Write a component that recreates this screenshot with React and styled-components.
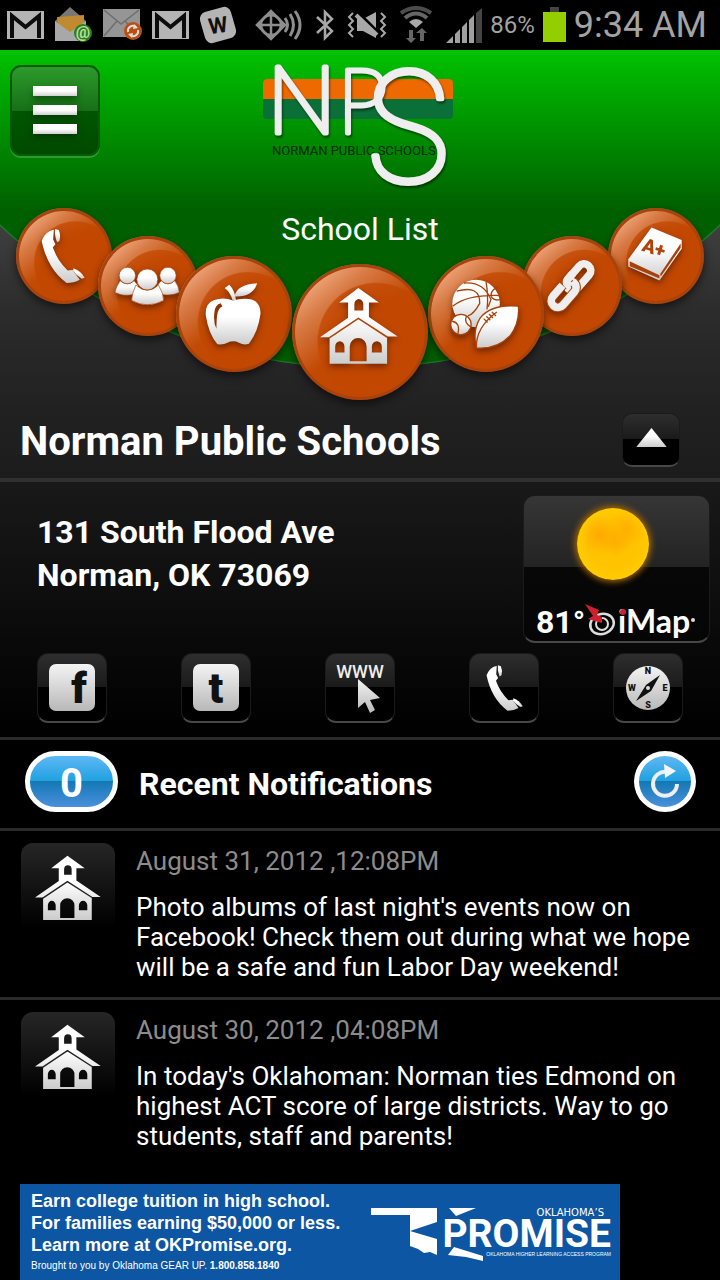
/**
 *
 * District home screen
 *
 */

import React from 'react';
import styled, { createGlobalStyle, css } from 'styled-components';

const GlobalStyle = createGlobalStyle`
  * {
    box-sizing: border-box;
  }

  body {
    margin: 0;
    background: #000;
    color: #fff;
    font-family: Roboto, 'Liberation Sans', sans-serif;
  }

  h1, h2, p {
    margin: 0;
  }

  button {
    padding: 0;
    border: 0;
    font-family: inherit;
    color: inherit;
    cursor: pointer;
  }

  a {
    color: inherit;
    text-decoration: none;
  }

  svg {
    display: block;
    flex: none;
    overflow: visible;
  }
`;

const Page = styled.div`
  display: flex;
  flex-direction: column;
  min-height: 100vh;
`;

/* status bar */

const StatusBar = styled.header`
  display: flex;
  align-items: center;
  justify-content: space-between;
  height: 50px;
  padding: 0 13px 0 7px;
  background: #000;
  color: #a3a3a3;
`;

const StatusGroup = styled.div`
  display: flex;
  align-items: center;
  gap: ${({ gap }) => gap}px;
`;

const BatteryText = styled.span`
  font-size: 24px;
`;

const Clock = styled.span`
  font-size: 36px;
  line-height: 48px;
`;

/* hero */

const Hero = styled.section`
  position: relative;
  isolation: isolate;
  padding: 15px 10px 0;
  background: linear-gradient(#444 150px, #2c2c2c 260px, #222 350px, #1c1c1c);

  &::before {
    content: '';
    position: absolute;
    z-index: -1;
    inset: 0;
    clip-path: circle(527px at 50% -209px);
    background:
      radial-gradient(circle at 50% -209px, transparent 525px, #2c8240 527px),
      linear-gradient(#00c200, #006000 160px, #005c00 100%);
  }
`;

const HeroTop = styled.div`
  display: grid;
  grid-template-columns: 90px 1fr 90px;
  justify-items: center;
  height: 122px;
  margin-bottom: 21px;
`;

const MenuButton = styled.button`
  display: flex;
  flex-direction: column;
  align-items: center;
  justify-content: center;
  gap: 9px;
  width: 90px;
  height: 91px;
  padding-bottom: 2px;
  border: 2px solid #0a5a0a;
  border-radius: 11px;
  background: linear-gradient(#2c9a2c, #177017 50%, #005600 50%, #004a00);
  box-shadow: 0 2px 0 #2f9a2f;
`;

const MenuLine = styled.span`
  width: 44px;
  height: 10px;
  background: linear-gradient(#fff 50%, #d0d0d0);
  box-shadow: 0 4px 6px rgba(0, 40, 0, 0.5);
`;

const Stage = styled.div`
  display: grid;
  justify-items: center;

  & > * {
    grid-area: 1 / 1;
  }
`;

const StageTitle = styled.h2`
  font-size: 32px;
  line-height: 42px;
  font-weight: 400;
`;

const Carousel = styled.nav`
  display: flex;
  align-items: flex-start;
  justify-content: center;
`;

const Orb = styled.button`
  display: grid;
  place-items: center;
  flex: none;
  position: relative;
  z-index: ${({ level }) => level};
  width: ${({ size }) => size}px;
  height: ${({ size }) => size}px;
  margin: ${({ drop }) => drop}px ${({ right }) => right || 0}px 0 ${({ left }) => left || 0}px;
  padding-right: 3px;
  padding-bottom: ${({ lift }) => lift || 0}px;
  border-radius: 50%;
  background:
    radial-gradient(circle closest-side at 62% 57%, #c24700 60%, rgba(194, 71, 0, 0.75) 112%, transparent 115%),
    linear-gradient(140deg, #f5b08a 10%, #d77a44 28%, #c24a04 50%, #c24700 78%, #cc6a20);
  box-shadow: inset 0 0 0 3px #a9430b, 0 4px 8px rgba(0, 0, 0, 0.55);

  svg {
    filter: drop-shadow(0 3px 3px rgba(60, 20, 0, 0.6));
  }
`;

const TitleRow = styled.div`
  display: flex;
  align-items: center;
  justify-content: space-between;
  height: 78px;
  padding: 2px 30px 0 10px;
`;

const Title = styled.h1`
  padding-top: 4px;
  font-size: 40px;
  line-height: 48px;
  font-weight: 700;
`;

const glossy = css`
  background: linear-gradient(#2e2e2e, #1a1a1a 50%, #000 50%);
  border: 1px solid #1b1b1b;
  border-bottom: 2px solid #484848;
`;

const CollapseButton = styled.button`
  ${glossy}
  display: grid;
  place-items: center;
  width: 58px;
  height: 54px;
  padding-bottom: 4px;
  border-radius: 10px;
`;

/* contact panel */

const Contact = styled.section`
  border-top: 4px solid #303030;
  border-bottom: 3px solid #2a2a2a;
  padding-bottom: 14px;
  background: linear-gradient(#191919, #000);
`;

const ContactTop = styled.div`
  display: flex;
  justify-content: space-between;
  padding: 13px 10px 10px 37px;
`;

const Address = styled.address`
  padding-top: 16px;
  font-size: 32px;
  line-height: 43px;
  font-weight: 700;
  font-style: normal;
`;

const WeatherCard = styled.a`
  ${glossy}
  display: flex;
  flex-direction: column;
  align-items: center;
  justify-content: space-between;
  width: 187px;
  height: 148px;
  padding-top: 12px;
  border-radius: 12px;
  background: linear-gradient(#363636, #232323 49%, #070707 49%, #050505);
`;

const Sun = styled.span`
  width: 72px;
  height: 72px;
  margin-right: 8px;
  border-radius: 50%;
  background:
    radial-gradient(circle at 32% 38%, rgba(255, 140, 0, 0.5), transparent 30%),
    radial-gradient(circle at 68% 30%, rgba(255, 150, 0, 0.45), transparent 28%),
    radial-gradient(circle at 55% 50%, rgba(255, 150, 0, 0.4), transparent 26%),
    radial-gradient(#ffc400 50%, #ffd000 85%, #f5b000);
  box-shadow: 0 0 6px 2px #a86800;
`;

const WeatherFoot = styled.span`
  display: flex;
  align-items: center;
`;

const Degrees = styled.span`
  font-size: 32px;
  line-height: 38px;
  font-weight: 700;
`;

const SocialRow = styled.nav`
  display: grid;
  grid-template-columns: repeat(5, 1fr);
  justify-items: center;
`;

const Tile = styled.a`
  ${glossy}
  display: grid;
  place-items: center;
  width: 70px;
  height: 70px;
  border-radius: 11px;
`;

/* notifications */

const NotesHead = styled.div`
  display: flex;
  align-items: center;
  gap: 21px;
  height: 91px;
  padding: 0 24px 5px 25px;
  border-bottom: 3px solid #2a2a2a;
`;

const blueGloss = css`
  border: 5px solid #fff;
  background: linear-gradient(#5fb8f5, #1fa0e0 50%, #1478b4 50%, #4a90dc);
`;

const Count = styled.span`
  ${blueGloss}
  display: grid;
  place-items: center;
  width: 93px;
  height: 61px;
  padding-top: 4px;
  border-radius: 31px;
  font-size: 40px;
  font-weight: 700;
`;

const NotesTitle = styled.h2`
  flex: 1;
  padding-top: 4px;
  font-size: 32px;
  line-height: 40px;
  font-weight: 700;
`;

const RefreshButton = styled.button`
  ${blueGloss}
  display: grid;
  place-items: center;
  width: 62px;
  height: 61px;
  border-radius: 50%;
`;

const Note = styled.article`
  display: flex;
  gap: 21px;
  padding: 12px 20px 15px 21px;

  & + & {
    border-top: 3px solid #2a2a2a;
  }
`;

const NoteIcon = styled.div`
  display: grid;
  justify-items: center;
  flex: none;
  width: 94px;
  height: 94px;
  padding-top: 12px;
  border-radius: 12px;
  background: linear-gradient(#262626, #000 90%);
`;

const NoteBody = styled.div`
  padding-top: 3px;
`;

const NoteDate = styled.time`
  display: block;
  margin-bottom: 16px;
  font-size: 26px;
  line-height: 30px;
  color: #8c8c8c;
`;

const NoteText = styled.p`
  font-size: 26px;
  line-height: 30px;
`;

/* sponsor banner */

const Banner = styled.a`
  display: flex;
  justify-content: space-between;
  width: calc(100% - 120px);
  height: 96px;
  margin: 18px 0 0 20px;
  padding: 6px 9px 0 11px;
  background: #0d56a4;
  font-family: 'Liberation Sans', Arial, sans-serif;
`;

const BannerLead = styled.p`
  font-size: 18px;
  line-height: 22px;
  font-weight: 700;
  white-space: nowrap;
`;

const BannerSmall = styled.p`
  font-size: 10px;
  line-height: 20px;
`;

/* drawings */

const Gradients = () => (
  <svg width="0" height="0" style={{ position: 'absolute' }} aria-hidden="true">
    <defs>
      <linearGradient id="metal" x1="0" y1="0" x2="0" y2="1">
        <stop offset="0.4" stopColor="#fff" />
        <stop offset="1" stopColor="#ccc" />
      </linearGradient>
      <linearGradient id="silver" x1="0" y1="0" x2="0" y2="1">
        <stop offset="0" stopColor="#f4f4f4" />
        <stop offset="1" stopColor="#b8b8b8" />
      </linearGradient>
    </defs>
  </svg>
);

const GmailIcon = () => (
  <svg width="37" height="28" viewBox="0 0 37 28">
    <rect width="37" height="28" fill="#b4b4b4" />
    <path d="M5 27V5L18.500 16L32 5V27" fill="none" stroke="#0c0c0c" strokeWidth="4" />
  </svg>
);

const OpenMailIcon = () => (
  <svg width="39" height="36" viewBox="0 0 39 36">
    <path d="M1 14L16 0L32 14V34H1Z" fill="#777" />
    <path d="M3 10L30 8V26H5Z" fill="#c08a30" />
    <path d="M1 14L16 25L32 14V34H1Z" fill="#a8a8a8" />
    <circle cx="29" cy="26" r="9" fill="#2c7d1c" />
    <text x="29" y="31" textAnchor="middle" fontSize="16" fontWeight="700" fill="#b8e0a0">@</text>
  </svg>
);

const SyncMailIcon = () => (
  <svg width="39" height="32" viewBox="0 0 39 32">
    <rect width="37" height="28" fill="#959595" />
    <path d="M1 1L18 15L36 1M1 27L14 12M36 27L22 12" fill="none" stroke="#6e6e6e" strokeWidth="1.500" />
    <circle cx="30" cy="22" r="9" fill="#bb4f10" />
    <path d="M25 23A5 5 0 0 1 33 18M35 21A5 5 0 0 1 27 26" fill="none" stroke="#ddd" strokeWidth="2" />
    <path d="M31 15L35 19L30 20ZM29 29L25 25L30 24Z" fill="#ddd" />
  </svg>
);

const WordsIcon = () => (
  <svg width="38" height="38" viewBox="0 0 38 38">
    <rect x="3" y="3" width="32" height="32" rx="7" fill="#b4b4b4" transform="rotate(-16 19 19)" />
    <text x="19" y="27" textAnchor="middle" fontSize="22" fontWeight="700" fill="#111" transform="rotate(-8 19 19)">W</text>
  </svg>
);

const BeaconIcon = () => (
  <svg width="46" height="32" viewBox="0 0 46 32" fill="none" stroke="#8e8e8e" strokeWidth="2.500">
    <circle cx="15" cy="16" r="10" />
    <path d="M1 16L15 2L29 16L15 30ZM1 16H29M15 2V30" />
    <path d="M29 9Q34 16 29 23M34 5Q41 16 34 27M39 2Q49 16 39 30" strokeWidth="3" />
  </svg>
);

const BluetoothIcon = () => (
  <svg width="18" height="32" viewBox="0 0 18 32" fill="none" stroke="#a8a8a8" strokeWidth="2.500">
    <path d="M1 8L16 22L9 29V3L16 10L1 24" />
  </svg>
);

const MuteIcon = () => (
  <svg width="38" height="28" viewBox="0 0 38 28">
    <path d="M9 8H15L28 1V27L15 20H9Z" fill="#a8a8a8" />
    <path d="M9 1L31 23" stroke="#000" strokeWidth="4" />
    <path d="M8 4L29 24" stroke="#a8a8a8" strokeWidth="4" />
    <path d="M5 2L1 6L5 10L1 14L5 18L1 22L5 26M33 2L37 6L33 10L37 14L33 18L37 22L33 26" fill="none" stroke="#a8a8a8" strokeWidth="2" />
  </svg>
);

const WifiIcon = () => (
  <svg width="32" height="36" viewBox="0 0 32 36" fill="none">
    <path d="M1 6Q16 -4 31 6" stroke="#4c4c4c" strokeWidth="4" />
    <path d="M5 11Q16 2 27 11" stroke="#666" strokeWidth="4" />
    <path d="M9 15Q16 9 23 15L16 21Z" fill="#a8a8a8" />
    <path d="M9 23H13V31H16L11 36L6 31H9ZM20 34H24V26H27L22 21L16 26H20Z" fill="#666" />
  </svg>
);

const SignalIcon = () => (
  <svg width="36" height="36" viewBox="0 0 36 36">
    <path d="M0 36L7 29V36ZM9 27L14 22V36H9ZM16 20L21 15V36H16ZM23 13L28 8V36H23Z" fill="#a0a0a0" />
    <path d="M30 6L36 1V36H30Z" fill="#444" />
  </svg>
);

const BatteryIcon = () => (
  <svg width="23" height="36" viewBox="0 0 23 36">
    <rect x="7" width="9" height="5" fill="#444" />
    <rect y="5" width="23" height="30" fill="#93cf00" />
  </svg>
);

const DistrictLogo = () => (
  <svg width="200" height="124" viewBox="0 0 200 124" role="img" aria-label="Norman Public Schools logo">
    <rect x="3" y="14" width="190" height="40" rx="4" fill="#0b7038" />
    <path d="M3 34V18Q3 14 7 14H189Q193 14 193 18V34Z" fill="#ee6a00" />
    <text x="12" y="90" fontSize="13" fill="#052b05">NORMAN PUBLIC SCHOOLS</text>
    <text
      fontFamily="Inter, sans-serif"
      fontWeight="100"
      fill="#eee"
      stroke="#eee"
      strokeWidth="5"
      strokeLinejoin="round"
      style={{ filter: 'drop-shadow(1px 2px 1px rgba(0,0,0,.5))' }}
    >
      <tspan x="7" y="68" fontSize="90">N</tspan>
      <tspan x="77" y="68" fontSize="90" fontFamily="Lato, sans-serif">P</tspan>
      <tspan x="102" y="117" fontSize="152">S</tspan>
    </text>
  </svg>
);

const SchoolIcon = ({ size, ink }) => (
  <svg width={size} height={size} viewBox="120 113 236 230">
    <path
      fill="url(#metal)"
      fillRule="evenodd"
      d="M236 113L298 157H268V201L355 260H323V342H149V262H120L205 203V157H178ZM224 181V162a13 15 0 0 1 27 0V181ZM166 308V290a14 16 0 0 1 28 0V308ZM277 308V290a15 16 0 0 1 30 0V308ZM210 335V290a25 25 0 0 1 51 0V335Z"
    />
    <path d="M148 264L236 205L324 262" fill="none" stroke={ink} strokeWidth="5" />
  </svg>
);

const PhoneIcon = ({ width, height }) => (
  <svg width={width} height={height} viewBox="122 84 134 168" fill="url(#metal)">
    <path d="M150 91L161 88L159 118L166 132L158 142Q172 182 203 212L218 211L240 240Q222 250 200 250Q142 208 124 122Q132 100 150 91Z" />
    <path d="M165 86L176 89Q183 106 178 122L171 126Q163 108 165 86Z" />
    <path d="M221 205Q242 212 255 234L246 237Q230 228 220 213Z" />
  </svg>
);

const PeopleIcon = () => (
  <svg width="66" height="38" viewBox="340 205 198 116" fill="url(#metal)" stroke="#b04408" strokeWidth="2">
    <path d="M357 247Q343 268 341 283Q368 296 397 289L412 262L400 247Q379 266 357 247Z" />
    <path d="M482 247Q503 266 524 247Q537 266 538 283Q515 294 485 289L470 262Z" />
    <circle cx="379" cy="231" r="25" />
    <circle cx="503" cy="231" r="25" />
    <path d="M405 260Q393 285 392 307Q440 334 490 307Q489 285 474 260Q440 292 405 260Z" />
    <circle cx="440" cy="243" r="32" />
  </svg>
);

const AppleIcon = () => (
  <svg width="56" height="63" viewBox="608 247 168 190" fill="url(#metal)">
    <path d="M697 288Q702 252 765 248Q752 290 697 288Z" />
    <path d="M691 300Q685 276 667 262L681 252Q697 268 701 298Z" />
    <path fillRule="evenodd" d="M692 300Q665 288 635 298Q607 308 610 345Q618 400 645 432Q665 434 675 427Q693 418 710 427Q725 436 740 430Q768 395 775 340Q775 300 740 295Q715 292 692 300ZM655 308Q638 312 636 335Q632 365 642 385Q642 350 646 335Q650 322 660 318Z" />
  </svg>
);

const BallsIcon = () => (
  <svg width="68" height="70" viewBox="101 239 206 210" fill="url(#metal)" stroke="#a8420a" strokeWidth="4">
    <circle cx="177" cy="312" r="72" stroke="none" />
    <path fill="none" d="M107 320Q150 285 248 288M118 275Q190 255 188 312Q170 345 152 350M140 250Q200 245 222 300L214 322M207 245Q215 290 210 330M244 262Q215 275 225 295Q235 305 249 300" />
    <circle cx="131" cy="376" r="31" />
    <path fill="none" d="M104 366Q130 370 122 403M148 350Q138 370 162 384" />
    <path d="M178 447Q165 395 190 355Q225 313 305 320Q310 370 280 410Q240 452 178 447Z" />
    <path fill="none" d="M178 447Q175 385 240 338M200 358L212 370M208 351L220 363M216 344L228 356M225 338L237 350" />
  </svg>
);

const ChainIcon = () => (
  <svg width="54" height="54" viewBox="378 183 154 154" fill="none">
    <g transform="rotate(-49 455 259)">
      <rect x="443" y="240" width="88" height="38" rx="19" stroke="#eee" strokeWidth="22" />
      <rect x="379" y="240" width="88" height="38" rx="19" stroke="#b04408" strokeWidth="28" />
      <rect x="379" y="240" width="88" height="38" rx="19" stroke="#eee" strokeWidth="22" />
      <path d="M440 240H470" stroke="#b04408" strokeWidth="28" />
      <path d="M454 259Q446 240 464 240H484" stroke="#eee" strokeWidth="22" />
    </g>
  </svg>
);

const GradeBookIcon = () => (
  <svg width="54" height="54" viewBox="617 85 163 162">
    <path d="M688 86L779 124V150L712 246L618 204V182Z" fill="url(#metal)" />
    <path d="M622 188L712 230V240L622 203ZM716 234L776 148V134L714 226Z" fill="#a8420a" />
    <text x="695" y="168" textAnchor="middle" fontSize="58" fontWeight="900" fill="#b04408" transform="rotate(18 697 150)">A+</text>
  </svg>
);

const ImapLogo = () => (
  <svg width="112" height="38" viewBox="0 0 112 38">
    <ellipse cx="17" cy="21" rx="12" ry="10" fill="none" stroke="#ddd" strokeWidth="2.500" transform="rotate(-20 17 21)" />
    <ellipse cx="17" cy="21" rx="6" ry="6" fill="none" stroke="#ddd" strokeWidth="2" />
    <path d="M0 1L14 7L12 12L17 14L17 20L3 16L8 13Z" fill="#d02030" />
    <text x="33" y="30" fontSize="32" fontWeight="700" fontFamily="Lato, sans-serif" fill="#fff">iMap</text>
    <circle cx="38" cy="9" r="3" fill="#d02030" />
    <circle cx="108" cy="17" r="2" fill="#ddd" />
  </svg>
);

const LetterBadge = ({ letter, x }) => (
  <svg width="46" height="47" viewBox="0 0 46 47">
    <rect width="46" height="47" rx="7" fill="url(#silver)" />
    <text x={x} y="39" textAnchor="middle" fontSize="43" fontWeight="900" fill="#111">{letter}</text>
  </svg>
);

const WebIcon = () => (
  <svg width="56" height="56" viewBox="0 0 56 56">
    <text x="28" y="18" textAnchor="middle" fontSize="18" fontWeight="500" fill="#eee">WWW</text>
    <path d="M26 19V48L33 42L38 53L43 50L38 40L48 38Z" fill="url(#silver)" />
  </svg>
);

const CompassIcon = () => (
  <svg width="46" height="46" viewBox="0 0 46 46">
    <circle cx="23" cy="23" r="22" fill="url(#silver)" />
    <path d="M11 36L21 20L35 10L26 26Z" fill="#111" />
    <circle cx="23" cy="23" r="2" fill="#ddd" />
    <g fontSize="9" fontWeight="900" fill="#111" textAnchor="middle">
      <text x="23" y="9">N</text>
      <text x="40" y="26">E</text>
      <text x="23" y="43">S</text>
      <text x="7" y="26">W</text>
    </g>
  </svg>
);

const RefreshIcon = () => (
  <svg width="30" height="36" viewBox="0 0 30 36">
    <path d="M27 20A12 12 0 1 1 17 8" fill="none" stroke="#eee" strokeWidth="4" />
    <path d="M14 0L26 7L15 14Z" fill="#f6f6f6" />
  </svg>
);

const PromiseLogo = () => (
  <svg width="240" height="72" viewBox="0 0 240 72" role="img" aria-label="Oklahoma's Promise">
    <g fill="#fff">
      <path d="M0 18H66V32L39 41L66 49V65L59 62L53 63L47 59L39 56V25H0Z" />
      <path d="M78 18H105L85 26Z" />
      <path d="M83 57L112 66V71L95 67L77 65Z" />
      <text x="233" y="26" textAnchor="end" fontSize="10" fontFamily="'DejaVu Sans', sans-serif">OKLAHOMA’S</text>
      <text x="240" y="57" textAnchor="end" fontSize="39" fontWeight="700" fontFamily="Roboto, sans-serif">PROMISE</text>
      <text x="240" y="66" textAnchor="end" fontSize="5">OKLAHOMA HIGHER LEARNING ACCESS PROGRAM</text>
    </g>
  </svg>
);

const orbs = [
  { label: 'Call', size: 96, drop: 0, level: 1, icon: <PhoneIcon width={44} height={56} /> },
  { label: 'Staff', size: 100, drop: 28, left: -14, level: 2, icon: <PeopleIcon /> },
  { label: 'Lunch', size: 116, drop: 48, left: -22, level: 3, icon: <AppleIcon /> },
  { label: 'Schools', size: 136, drop: 56, lift: 12, level: 4, icon: <SchoolIcon size={78} ink="#b04408" /> },
  { label: 'Athletics', size: 116, drop: 48, right: -22, level: 3, icon: <BallsIcon /> },
  { label: 'Links', size: 100, drop: 28, right: -14, level: 2, icon: <ChainIcon /> },
  { label: 'Grades', size: 96, drop: 0, lift: 4, level: 1, icon: <GradeBookIcon /> },
];

const socials = [
  { label: 'Facebook', icon: <LetterBadge letter="f" x={30} /> },
  { label: 'Twitter', icon: <LetterBadge letter="t" x={23} /> },
  { label: 'Website', icon: <WebIcon /> },
  { label: 'Phone', icon: <PhoneIcon width={37} height={48} /> },
  { label: 'Directions', icon: <CompassIcon /> },
];

const notes = [
  {
    date: 'August 31, 2012 ,12:08PM',
    text: "Photo albums of last night's events now on Facebook! Check them out during what we hope will be a safe and fun Labor Day weekend!",
  },
  {
    date: 'August 30, 2012 ,04:08PM',
    text: "In today's Oklahoman: Norman ties Edmond on highest ACT score of large districts. Way to go students, staff and parents!",
  },
];

function App() {
  return (
    <Page>
      <GlobalStyle />
      <Gradients />
      <StatusBar>
        <StatusGroup gap={10}>
          <GmailIcon />
          <OpenMailIcon />
          <SyncMailIcon />
          <GmailIcon />
          <WordsIcon />
        </StatusGroup>
        <StatusGroup gap={14}>
          <BeaconIcon />
          <BluetoothIcon />
          <MuteIcon />
          <WifiIcon />
          <StatusGroup gap={8}>
            <SignalIcon />
            <BatteryText>86%</BatteryText>
            <BatteryIcon />
            <Clock>9:34 AM</Clock>
          </StatusGroup>
        </StatusGroup>
      </StatusBar>

      <Hero>
        <HeroTop>
          <MenuButton aria-label="Menu">
            <MenuLine />
            <MenuLine />
            <MenuLine />
          </MenuButton>
          <DistrictLogo />
        </HeroTop>
        <Stage>
          <StageTitle>School List</StageTitle>
          <Carousel>
            {orbs.map(({ label, icon, ...rest }) => (
              <Orb key={label} aria-label={label} {...rest}>
                {icon}
              </Orb>
            ))}
          </Carousel>
        </Stage>
        <TitleRow>
          <Title>Norman Public Schools</Title>
          <CollapseButton aria-label="Collapse">
            <svg width="31" height="19" viewBox="0 0 32 20">
              <path d="M16 0L32 20H0Z" fill="url(#metal)" />
            </svg>
          </CollapseButton>
        </TitleRow>
      </Hero>

      <Contact>
        <ContactTop>
          <Address>
            131 South Flood Ave
            <br />
            Norman, OK 73069
          </Address>
          <WeatherCard href="#weather">
            <Sun />
            <WeatherFoot>
              <Degrees>81°</Degrees>
              <ImapLogo />
            </WeatherFoot>
          </WeatherCard>
        </ContactTop>
        <SocialRow>
          {socials.map(({ label, icon }) => (
            <Tile key={label} href={`#${label.toLowerCase()}`} aria-label={label}>
              {icon}
            </Tile>
          ))}
        </SocialRow>
      </Contact>

      <main>
        <NotesHead>
          <Count>0</Count>
          <NotesTitle>Recent Notifications</NotesTitle>
          <RefreshButton aria-label="Refresh">
            <RefreshIcon />
          </RefreshButton>
        </NotesHead>
        {notes.map(note => (
          <Note key={note.date}>
            <NoteIcon>
              <SchoolIcon size={66} ink="#222" />
            </NoteIcon>
            <NoteBody>
              <NoteDate>{note.date}</NoteDate>
              <NoteText>{note.text}</NoteText>
            </NoteBody>
          </Note>
        ))}
      </main>

      <Banner href="#okpromise">
        <div>
          <BannerLead>Earn college tuition in high school.</BannerLead>
          <BannerLead>For families earning $50,000 or less.</BannerLead>
          <BannerLead>Learn more at OKPromise.org.</BannerLead>
          <BannerSmall>
            Brought to you by Oklahoma GEAR UP. <b>1.800.858.1840</b>
          </BannerSmall>
        </div>
        <PromiseLogo />
      </Banner>
    </Page>
  );
}

export default App;
